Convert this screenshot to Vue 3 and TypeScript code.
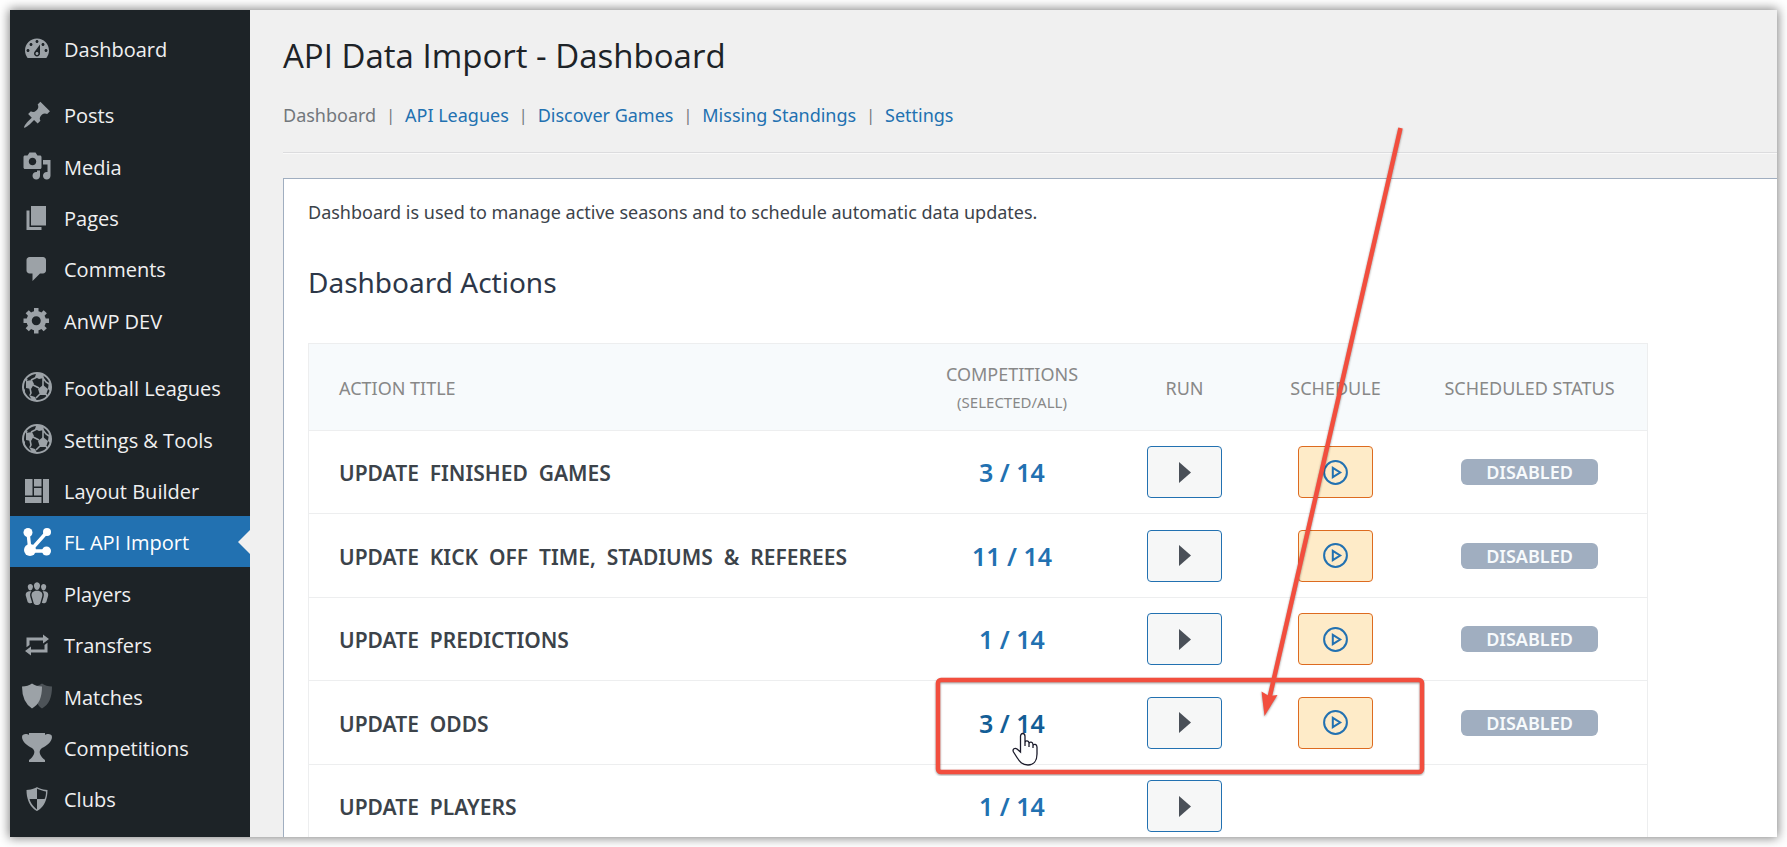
<script setup lang="ts">
interface MenuItem {
  label: string
  icon: string
  tall?: boolean
  current?: boolean
}

interface ActionRow {
  title: string
  count: string
  scheduled: boolean
  hover?: boolean
}

const glyphs: Record<string, string> = {
  dashboard:
    'M3.76 16h12.48c1.1-1.37 1.76-3.11 1.76-5 0-4.42-3.58-8-8-8s-8 3.58-8 8c0 1.89.66 3.63 1.76 5zM10 4c.55 0 1 .45 1 1s-.45 1-1 1-1-.45-1-1 .45-1 1-1zM6 6c.55 0 1 .45 1 1s-.45 1-1 1-1-.45-1-1 .45-1 1-1zm8 0c.55 0 1 .45 1 1s-.45 1-1 1-1-.45-1-1 .45-1 1-1zm-5.37 5.55L12 7v6c0 1.1-.9 2-2 2s-2-.9-2-2c0-.57.24-1.08.63-1.45zM4 10c.55 0 1 .45 1 1s-.45 1-1 1-1-.45-1-1 .45-1 1-1zm12 0c.55 0 1 .45 1 1s-.45 1-1 1-1-.45-1-1 .45-1 1-1zm-5 3c0-.55-.45-1-1-1s-1 .45-1 1 .45 1 1 1 1-.45 1-1z',
  pin: 'M10.44 3.02l1.82-1.82 6.36 6.35-1.83 1.82c-1.05-.68-2.48-.57-3.41.36l-.75.75c-.92.93-1.04 2.35-.35 3.41l-1.83 1.82-2.41-2.41-2.8 2.79c-.42.42-3.38 2.71-3.8 2.29s1.86-3.39 2.28-3.81l2.79-2.79L4.1 9.36l1.83-1.82c1.05.69 2.48.57 3.4-.36l.75-.75c.93-.92 1.05-2.35.36-3.41z',
  media:
    'M13 11V4c0-.55-.45-1-1-1h-1.67L9 1H5L3.67 3H2c-.55 0-1 .45-1 1v7c0 .55.45 1 1 1h10c.55 0 1-.45 1-1zM7 4.5c1.38 0 2.5 1.12 2.5 2.5S8.38 9.5 7 9.5 4.5 8.38 4.5 7 5.62 4.5 7 4.5zM14 6h5v10.5c0 1.38-1.12 2.5-2.5 2.5S14 17.88 14 16.5s1.12-2.5 2.5-2.5c.17 0 .34.02.5.05V9h-3V6zm-4 8.05V13h2v3.5c0 1.38-1.12 2.5-2.5 2.5S7 17.88 7 16.5 8.12 14 9.5 14c.17 0 .34.02.5.05z',
  pages: 'M6 15V2h10v13H6zm-1 1h8v2H3V5h2v11z',
  comment: 'M5 2h9c1.1 0 2 .9 2 2v7c0 1.1-.9 2-2 2h-2l-5 5v-5H5c-1.1 0-2-.9-2-2V4c0-1.1.9-2 2-2z',
  gear: 'M18 12h-2.18c-.17.7-.44 1.35-.81 1.93l1.54 1.54-2.1 2.1-1.54-1.54c-.58.36-1.23.63-1.91.79V19H8v-2.18c-.68-.16-1.33-.43-1.91-.79l-1.54 1.54-2.12-2.12 1.54-1.54c-.36-.58-.63-1.23-.79-1.91H1V9.03h2.17c.16-.7.44-1.35.8-1.94L2.43 5.55l2.1-2.1 1.54 1.54c.58-.37 1.24-.64 1.93-.81V2h3v2.18c.68.16 1.33.43 1.91.79l1.54-1.54 2.12 2.12-1.54 1.54c.36.59.64 1.24.8 1.94H18V12zm-8.5 1.5c1.66 0 3-1.34 3-3s-1.34-3-3-3-3 1.34-3 3 1.34 3 3 3z',
  layout: 'M2 2h5v11H2V2zm6 0h5v5H8V2zm6 0h4v16h-4V2zM8 8h5v5H8V8zm-6 6h11v4H2v-4z',
  players:
    'M8.03 4.46c-.29 1.28.55 3.46 1.97 3.46 1.41 0 2.25-2.18 1.96-3.46-.22-.98-1.08-1.63-1.96-1.63-.89 0-1.74.65-1.97 1.63zm-4.13.9c-.25 1.08.47 2.93 1.67 2.93s1.92-1.85 1.67-2.93c-.19-.83-.92-1.39-1.67-1.39s-1.48.56-1.67 1.39zm8.86 0c-.25 1.08.47 2.93 1.66 2.93 1.2 0 1.92-1.85 1.67-2.93-.19-.83-.92-1.39-1.67-1.39-.74 0-1.47.56-1.66 1.39zm-.59 11.43l1.25-4.3C14.2 10 12.71 8.47 10 8.47c-2.72 0-4.21 1.53-3.44 4.02l1.26 4.3C8.05 17.51 9 18 10 18c.98 0 1.94-.49 2.17-1.21zm-6.1-7.63c-.49.67-.96 1.83-.42 3.59l1.12 3.79c-.34.2-.77.31-1.2.31-.85 0-1.65-.41-1.85-1.03l-1.07-3.65c-.65-2.11.61-3.4 2.92-3.4.27 0 .54.02.79.06-.1.1-.2.22-.29.33zm8.35-.39c2.31 0 3.58 1.29 2.92 3.4l-1.07 3.65c-.2.62-1 1.03-1.85 1.03-.43 0-.86-.11-1.2-.31l1.11-3.77c.55-1.78.08-2.94-.42-3.61-.08-.11-.18-.23-.28-.33.25-.04.51-.06.79-.06z',
  transfers: 'M5 7v3l-2 1.5V5h11V3l4 3.01L14 9V7H5zm10 6v-3l2-1.5V15H6v2l-4-3.01L6 11v2h9z',
  shield: 'M10 2s3 2 7 2c0 11-7 14-7 14S3 15 3 4c4 0 7-2 7-2zm0 8h5s1-1 1-5c0 0-5-1-6-2v7H5c1 4 5 7 5 7v-7z',
}

const groups: MenuItem[][] = [
  [{ label: 'Dashboard', icon: 'dashboard' }],
  [
    { label: 'Posts', icon: 'pin' },
    { label: 'Media', icon: 'media', tall: true },
    { label: 'Pages', icon: 'pages' },
    { label: 'Comments', icon: 'comment' },
    { label: 'AnWP DEV', icon: 'gear', tall: true },
  ],
  [
    { label: 'Football Leagues', icon: 'ball', tall: true },
    { label: 'Settings & Tools', icon: 'ball', tall: true },
    { label: 'Layout Builder', icon: 'layout' },
    { label: 'FL API Import', icon: 'api', current: true },
    { label: 'Players', icon: 'players', tall: true },
    { label: 'Transfers', icon: 'transfers' },
    { label: 'Matches', icon: 'matches', tall: true },
    { label: 'Competitions', icon: 'cup' },
    { label: 'Clubs', icon: 'shield' },
  ],
]

const tabs: string[] = ['API Leagues', 'Discover Games', 'Missing Standings', 'Settings']

const rows: ActionRow[] = [
  { title: 'Update finished games', count: '3 / 14', scheduled: true },
  { title: 'Update kick off time, stadiums & referees', count: '11 / 14', scheduled: true },
  { title: 'Update predictions', count: '1 / 14', scheduled: true },
  { title: 'Update odds', count: '3 / 14', scheduled: true, hover: true },
  { title: 'Update players', count: '1 / 14', scheduled: false },
]

const words = (title: string): string => title.split(' ').join('\u00a0 ')
</script>

<template>
  <div class="frame">
    <nav class="sidebar" aria-label="Main menu">
      <ul v-for="(group, g) in groups" :key="g" class="group">
        <li v-for="item in group" :key="item.label">
          <a href="#" class="item" :class="{ tall: item.tall, current: item.current }">
            <svg v-if="item.icon === 'ball'" class="icon" viewBox="0 0 30 30" aria-hidden="true">
              <circle cx="15" cy="15" r="14" fill="none" stroke="currentColor" stroke-width="2" />
              <path d="M4 9l6-1 2 4-3 5-5-1zM16 17l5-4 5 4-2 6-6 0zM14 2l7 0 1 4-5 1-4-2zM27 9l2 5-1 5-2-2zM7 23l6 2 2 4-5-1zM1 15l2 3 0 3-2-3z" />
              <path d="M9 8l6-3M11 13l6 3M21 6l3 4 3 2M21 6l0 8M8 16l1 5-1 2M18 22l-4 4M24 22l1 2M4 9l1-2" fill="none" stroke="currentColor" stroke-width="1.6" />
            </svg>
            <svg v-else-if="item.icon === 'api'" class="icon" viewBox="0 0 30 30" aria-hidden="true">
              <path d="M6 5l2 19h17M8 24L25 5" fill="none" stroke="currentColor" stroke-width="3.4" />
              <circle cx="6" cy="5.500" r="4.500" /><circle cx="25" cy="5" r="4" />
              <circle cx="8" cy="23" r="6" /><circle cx="24.500" cy="24" r="4.500" />
            </svg>
            <svg v-else-if="item.icon === 'matches'" class="icon" viewBox="0 0 30 30" aria-hidden="true">
              <path d="M20 2.500q4 3 10 3c0 11-3 18-10 22q-7-4-10-22 6 0 10-3z" opacity=".38" />
              <path d="M10 2.500q4 3 10 3c0 11-3 18-10 22Q0 21 0 5.500q6 0 10-3z" />
            </svg>
            <svg v-else-if="item.icon === 'cup'" class="icon" viewBox="0 0 30 30" aria-hidden="true">
              <path d="M7 0h16v2c2-1.500 7-1.500 7 2 0 5-6 9-10 11-2 2-3 3-2 6 1 2 2 4 5 6v2H7v-2c3-2 4-4 5-6 1-3 0-4-2-6C6 13 0 9 0 4c0-3.500 5-3.500 7-2z" />
            </svg>
            <svg v-else class="icon" viewBox="0 0 20 20" aria-hidden="true"><path :d="glyphs[item.icon]" /></svg>
            <span class="label">{{ item.label }}</span>
          </a>
        </li>
      </ul>
    </nav>

    <main class="content">
      <h1>API Data Import - Dashboard</h1>
      <nav class="tabs" aria-label="Sections">
        <span>Dashboard</span>
        <template v-for="tab in tabs" :key="tab"><i>|</i><a href="#">{{ tab }}</a></template>
      </nav>
      <hr />
      <section class="panel">
        <p>Dashboard is used to manage active seasons and to schedule automatic data updates.</p>
        <h2>Dashboard Actions</h2>
        <table>
          <thead>
            <tr>
              <th class="title">Action title</th>
              <th class="count">Competitions<small>(selected/all)</small></th>
              <th class="run">Run</th>
              <th class="schedule">Schedule</th>
              <th class="status">Scheduled status</th>
            </tr>
          </thead>
          <tbody>
            <tr v-for="row in rows" :key="row.title">
              <td class="title">{{ words(row.title) }}</td>
              <td><a href="#" class="selected" :class="{ hover: row.hover }">{{ row.count }}</a></td>
              <td>
                <button type="button" class="btn" :aria-label="'Run: ' + row.title">
                  <svg width="12" height="21" viewBox="0 0 12 21" aria-hidden="true"><path d="M0 0l12 10.500L0 21z" /></svg>
                </button>
              </td>
              <td>
                <button v-if="row.scheduled" type="button" class="btn plan" :aria-label="'Schedule: ' + row.title">
                  <svg width="25" height="25" viewBox="0 0 25 25" aria-hidden="true">
                    <circle cx="12.500" cy="12.500" r="11.400" />
                    <path d="M9.800 7.800v9.400l7.400-4.700z" />
                  </svg>
                </button>
              </td>
              <td><span v-if="row.scheduled" class="badge">Disabled</span></td>
            </tr>
          </tbody>
        </table>
      </section>
    </main>

    <svg class="notes" width="500" height="660" viewBox="0 0 500 660" aria-hidden="true">
      <g class="mark">
        <rect x="13" y="564" width="484" height="92" rx="3" />
        <path d="M475.500 12L344 584" />
        <path class="tip" d="M339.500 600l-3-24.500 7.500 4.500 8.500-1z" />
      </g>
      <g transform="translate(87 616)">
        <path class="hand" d="M8.500 17V4.500C8.500 0.500 13 0.500 13 4.500V14v-3.500c.5-2.500 3.800-2 4 .5V15v-3.500c.8-2.200 3.800-1.500 4 1V16v-2.500c1-2 3.800-1.200 4 1.500v7c0 7-3.500 11-9 11-6 0-8.500-3.500-11-7.500L1.500 20c-1.500-3 1.500-4.500 3.500-3l3.500 3z" />
      </g>
    </svg>
  </div>
</template>

<style>
body {
  background: #fff;
}
</style>

<style scoped>
.frame {
  position: relative;
  display: flex;
  box-sizing: border-box;
  height: calc(100vh - 20px);
  margin: 10px;
  overflow: hidden;
  background: #f0f0f0;
  font-family: "Open Sans", "Noto Sans", sans-serif;
  box-shadow: 0 0 10px 1px rgba(0, 0, 0, 0.5);
}

.sidebar {
  flex: 0 0 240px;
  box-sizing: border-box;
  padding-top: 13px;
  background: #1d2327;
}

.group {
  margin: 0 0 15px;
  padding: 0;
  list-style: none;
}

.item {
  position: relative;
  display: flex;
  align-items: center;
  gap: 12px;
  height: 51px;
  padding-left: 12px;
  color: #f0f0f1;
  font-size: 20px;
  text-decoration: none;
  white-space: nowrap;
}

.item.tall {
  height: 52px;
}

.label {
  padding-top: 2px;
}

.icon {
  flex: none;
  width: 30px;
  height: 30px;
  fill: currentColor;
  color: #9ca2a7;
}

.current {
  background: #2271b1;
  color: #fff;
}

.current .icon {
  color: #fff;
}

.current::after {
  content: "";
  position: absolute;
  right: 0;
  border: 12px solid transparent;
  border-left-width: 0;
  border-right-color: #f0f0f0;
}

.content {
  flex: 1;
  min-width: 0;
  padding: 20px 0 0 33px;
}

h1 {
  margin: 0;
  color: #1d2327;
  font-size: 33px;
  font-weight: 400;
  line-height: 52px;
}

.tabs {
  display: flex;
  gap: 10px;
  margin-top: 16px;
  color: #72777c;
  font-family: "Noto Sans", "Open Sans", sans-serif;
  font-size: 18px;
  line-height: 34px;
}

.tabs i {
  font-size: 16px;
  font-style: normal;
}

.tabs a {
  color: #2271b1;
  text-decoration: none;
}

hr {
  height: 1px;
  margin: 20px 0 24px;
  border: 0;
  border-top: 1px solid #dcdcde;
  background: #f9f9f9;
}

.panel {
  box-sizing: border-box;
  min-height: 100%;
  padding: 19px 24px;
  border: 1px solid #a0aec0;
  border-right: 0;
  background: #fff;
  font-family: "Noto Sans", "Open Sans", sans-serif;
}

.panel p {
  margin: 0;
  color: #3c434a;
  font-size: 18px;
  line-height: 28px;
}

h2 {
  margin: 34px 0 39px;
  color: #2d3748;
  font-size: 28px;
  font-weight: 400;
  line-height: 44px;
}

table {
  width: 100%;
  max-width: 1340px;
  border: 1px solid #edeeef;
  border-collapse: collapse;
  table-layout: fixed;
  color: #3c434a;
  text-align: center;
  text-transform: uppercase;
}

th {
  height: 84px;
  padding: 2px 0 0;
  background: #f7fafc;
  color: #888;
  font-size: 18px;
  font-weight: 400;
  line-height: 28px;
  white-space: nowrap;
}

th small {
  display: block;
  font-size: 15px;
}

.count {
  width: 196px;
}

.run {
  width: 149px;
}

.schedule {
  width: 153px;
}

.status {
  width: 235px;
}

td {
  box-sizing: border-box;
  height: 83px;
  padding: 0;
  border-top: 1px solid #edeeef;
}

tr:nth-child(even) td {
  height: 84px;
}

.title {
  padding-left: 30px;
  text-align: left;
}

td.title {
  padding-top: 2px;
  font-size: 21px;
  font-weight: 600;
}

.selected {
  color: #2271b1;
  font-size: 25px;
  font-weight: 600;
  text-decoration: none;
}

.selected.hover {
  color: #135e96;
}

.btn {
  display: inline-flex;
  align-items: center;
  justify-content: center;
  width: 75px;
  height: 52px;
  padding: 0;
  border: 1px solid #2271b1;
  border-radius: 4px;
  background: #f6f7f7;
  vertical-align: middle;
}

.btn path {
  fill: #4a5058;
}

.btn.plan {
  border-color: #dd6b20;
  background: #feebc8;
}

.plan circle,
.plan path {
  fill: none;
  stroke: #2271b1;
  stroke-width: 2;
}

.badge {
  display: inline-block;
  width: 137px;
  border-radius: 6px;
  background: #a0aec0;
  color: #f7fafc;
  font-size: 18px;
  font-weight: 600;
  line-height: 26px;
  vertical-align: middle;
}

.notes {
  position: absolute;
  top: 106px;
  left: 915px;
  pointer-events: none;
}

.mark {
  fill: none;
  stroke: #f24e3e;
  stroke-width: 4.5;
  filter: drop-shadow(0 1px 1px rgba(0, 0, 0, 0.4));
}

.mark .tip {
  fill: #f24e3e;
  stroke: none;
}

.hand {
  fill: #fff;
  stroke: #1b1b2b;
  stroke-width: 1.3;
}
</style>
